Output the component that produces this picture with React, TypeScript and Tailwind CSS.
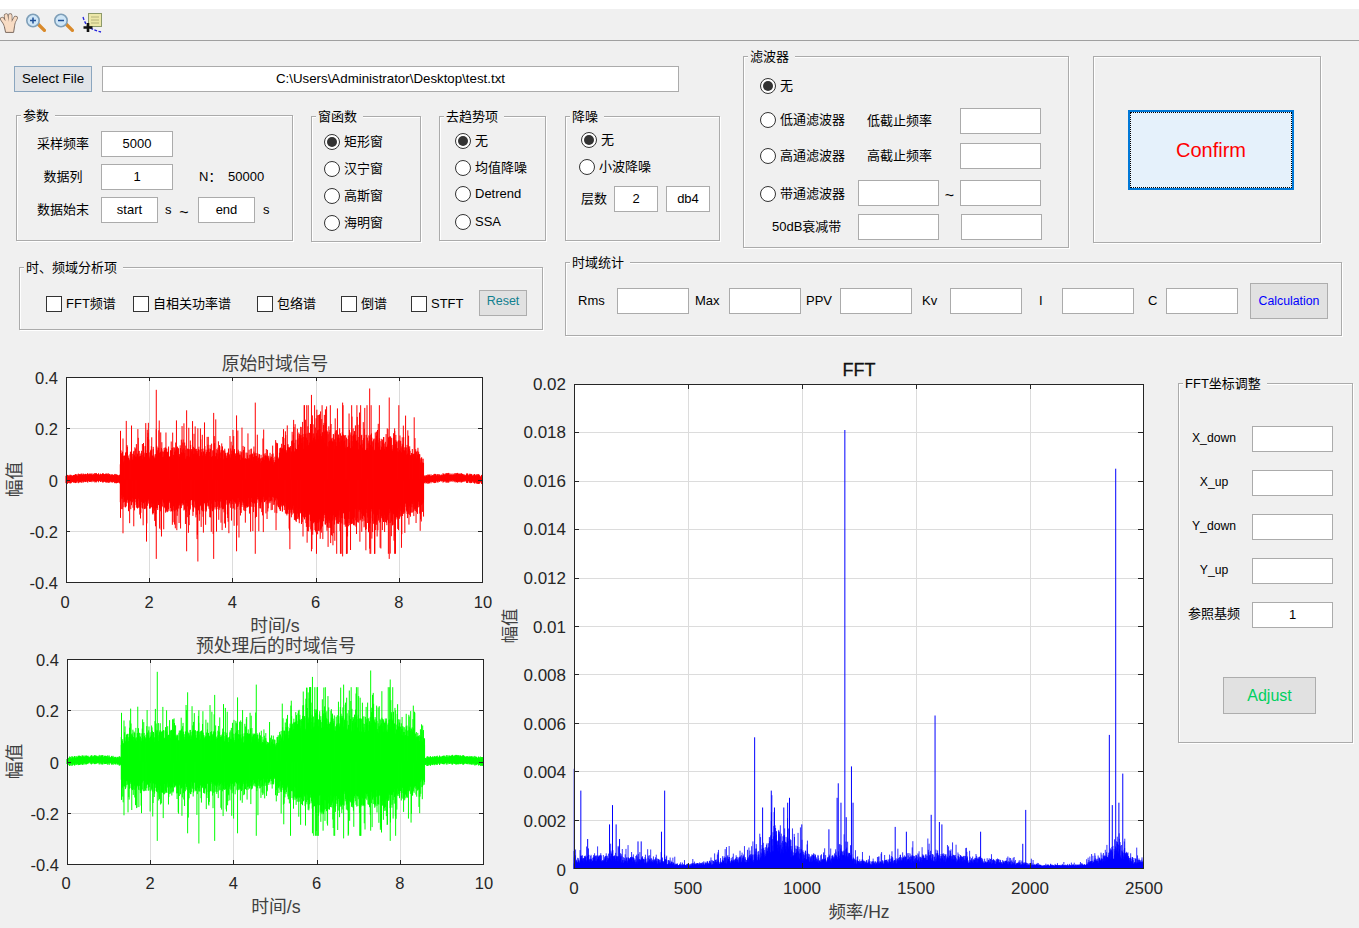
import type { ReactNode } from "react";

// seeded random so the traces stay the same on every render
function makeRandom(seed: number) {
    let a = seed;
    return () => {
        a = (a + 0x6d2b79f5) | 0;
        let t = Math.imul(a ^ (a >>> 15), 1 | a);
        t = (t + Math.imul(t ^ (t >>> 7), 61 | t)) ^ t;
        return ((t ^ (t >>> 14)) >>> 0) / 4294967296;
    };
}

function lerpTable(table: number[][], v: number) {
    for (let i = 1; i < table.length; i++) {
        if (v <= table[i][0]) {
            const [x0, y0] = table[i - 1];
            const [x1, y1] = table[i];
            return y0 + ((y1 - y0) * (v - x0)) / (x1 - x0);
        }
    }
    return table[table.length - 1][1];
}

const TIME_ENV = [
    [1.3, 0.08], [1.45, 0.1], [2.5, 0.115], [3.5, 0.11], [4.5, 0.1], [5, 0.08], [5.15, 0.11],
    [5.6, 0.155], [6, 0.19], [6.5, 0.165], [7.2, 0.16], [7.8, 0.155], [8.3, 0.12], [8.6, 0.085],
];
const TIME_SPIKES = [
    [1.31, 0.19, -0.15], [1.37, 0.16, -0.21], [2.17, 0.35, -0.31], [2.9, 0.27, -0.28], [3.17, 0.2, -0.32],
    [3.55, 0.26, -0.31], [4.1, 0.25, -0.28], [4.55, 0.3, -0.29], [5.9, 0.33, -0.28], [6.65, 0.3, -0.3],
    [7.3, 0.355, -0.27], [7.77, 0.32, -0.31], [7.9, 0.2, -0.29],
];

function timePath(seed: number, left: number, right: number, mid: number, perUnit: number) {
    const rnd = makeRandom(seed);
    const toX = (t: number) => left + (t / 10) * (right - left);
    let d = "";
    const line = (t: number, hi: number, lo: number) => {
        d += `M${toX(t).toFixed(2)} ${(mid - hi * perUnit).toFixed(1)}V${(mid - lo * perUnit).toFixed(1)}`;
    };
    for (let t = 0; t <= 10; t += 0.009) {
        const quiet = t < 1.3 || t > 8.6;
        if (quiet) {
            const hump = 0.007 * Math.sin((Math.PI * (t < 1.3 ? t : t - 8.6)) / 1.4);
            const a = 0.009 + rnd() * 0.01;
            line(t, hump + a, hump - a);
            continue;
        }
        const env = lerpTable(TIME_ENV, t);
        line(t, env * (0.7 + rnd() * 0.4), -env * (0.7 + rnd() * 0.4));
        if (rnd() < 0.6) {
            const reach = Math.min(env * (1.05 + rnd() * rnd() * 1.35), 0.29);
            if (rnd() < 0.5) line(t, reach, 0);
            else line(t, 0, -reach);
        }
    }
    TIME_SPIKES.forEach(([t, hi, lo]) => line(t, hi, lo));
    return d;
}

const FFT_ENV = [
    [0, 0.0006], [100, 0.00065], [250, 0.00055], [400, 0.00045], [470, 0.00018], [560, 0.00026], [640, 0.0005],
    [780, 0.00065], [830, 0.001], [880, 0.002], [950, 0.0014], [1020, 0.00075], [1120, 0.00055], [1190, 0.00095],
    [1240, 0.0004], [1320, 0.00032], [1450, 0.0006], [1600, 0.00075], [1800, 0.0005], [1950, 0.00032],
    [2060, 0.00014], [2230, 0.00016], [2320, 0.0006], [2390, 0.0014], [2440, 0.00055], [2500, 0.0004],
];
const FFT_SPIKES = [
    [1, 0.0041], [30, 0.0032], [60, 0.0012], [156, 0.0018], [169, 0.0026], [185, 0.0018], [200, 0.0012], [281, 0.0011],
    [295, 0.0011], [384, 0.0015], [398, 0.0032], [793, 0.0054], [828, 0.0025], [866, 0.0032], [880, 0.0025],
    [921, 0.0025], [938, 0.0027], [946, 0.0029], [1000, 0.0018], [1119, 0.0016], [1155, 0.0029], [1160, 0.0035],
    [1172, 0.0027], [1189, 0.0181], [1195, 0.0021], [1218, 0.0042], [1225, 0.0027], [1410, 0.0017], [1459, 0.0015],
    [1568, 0.0022], [1585, 0.0063], [1604, 0.0019], [1615, 0.0018], [1785, 0.0015], [1970, 0.001], [1983, 0.0024],
    [2350, 0.0055], [2363, 0.0026], [2378, 0.0165], [2392, 0.0027], [2409, 0.0039],
];

function fftPath() {
    const rnd = makeRandom(77);
    const toX = (f: number) => 574 + (f / 2500) * 569.5;
    const toY = (v: number) => 868 - (v / 0.02) * 484;
    let d = "";
    for (let f = 0; f <= 2500; f += 0.7) {
        const env = lerpTable(FFT_ENV, f);
        const r = rnd();
        let v = env * (0.3 + 0.55 * r * r);
        if (rnd() < 0.1) v = env * (0.8 + rnd() * rnd() * 1.1);
        d += `M${toX(f).toFixed(2)} 869V${toY(v).toFixed(1)}`;
    }
    return d;
}

const spikePath = FFT_SPIKES.map(
    ([f, v]) => `M${(574 + (f / 2500) * 569.5).toFixed(2)} 869V${(868 - (v / 0.02) * 484).toFixed(1)}`
).join("");

const PLOT_TEXT = "#262626";

function TimePlot(props: {
    viewY: number;
    height: number;
    left: number;
    right: number;
    top: number;
    bottom: number;
    tickGap: number;
    title: string;
    titleY: number;
    color: string;
    seed: number;
}) {
    const { viewY, height, left, right, top, bottom, tickGap, title, titleY, color, seed } = props;
    const mid = (top + bottom) / 2;
    const perUnit = (bottom - top) / 0.8;
    const xs = [0, 2, 4, 6, 8, 10];
    const ys = [0.4, 0.2, 0, -0.2, -0.4];
    const center = (left + right) / 2 + 1;
    return (
        <svg width={500} height={height} viewBox={`0 ${viewY} 500 ${height}`} className="block">
            <rect x={left} y={top} width={right - left} height={bottom - top} fill="#fff" />
            {xs.slice(1, -1).map((v) => {
                const x = Math.round(left + (v / 10) * (right - left)) + 0.5;
                return <path key={v} d={`M${x} ${top}V${bottom}`} stroke="#dcdcdc" />;
            })}
            {ys.slice(1, -1).map((v) => {
                const y = Math.round(mid - v * perUnit) + 0.5;
                return <path key={v} d={`M${left} ${y}H${right}`} stroke="#dcdcdc" />;
            })}
            <path d={timePath(seed, left, right, mid, perUnit)} stroke={color} strokeWidth={1} fill="none" />
            <rect x={left + 0.5} y={top + 0.5} width={right - left} height={bottom - top} fill="none" stroke={PLOT_TEXT} />
            {xs.slice(1, -1).map((v) => {
                const x = Math.round(left + (v / 10) * (right - left)) + 0.5;
                return <path key={v} d={`M${x} ${top}v4M${x} ${bottom}v-4`} stroke={PLOT_TEXT} />;
            })}
            {ys.slice(1, -1).map((v) => {
                const y = Math.round(mid - v * perUnit) + 0.5;
                return <path key={v} d={`M${left} ${y}h4M${right} ${y}h-4`} stroke={PLOT_TEXT} />;
            })}
            <g fill={PLOT_TEXT} className="text-[16.5px]">
                {ys.map((v) => (
                    <text key={v} x={left - 8} y={mid - v * perUnit + 7} textAnchor="end">
                        {v}
                    </text>
                ))}
                {xs.map((v) => (
                    <text
                        key={v}
                        x={left + (v / 10) * (right - left) + (v === 10 ? 1 : v === 0 ? -1 : 0)}
                        y={bottom + tickGap}
                        textAnchor="middle"
                    >
                        {v}
                    </text>
                ))}
            </g>
            <g fill="#404040" className="text-[17.8px]">
                <text x={center} y={titleY} textAnchor="middle">
                    {title}
                </text>
                <text x={center} y={bottom + tickGap + 24} textAnchor="middle">
                    时间/s
                </text>
                <text transform={`translate(21 ${mid}) rotate(-90)`} textAnchor="middle">
                    幅值
                </text>
            </g>
        </svg>
    );
}

function FftPlot() {
    const xs = [0, 500, 1000, 1500, 2000, 2500];
    const ys = ["0", "0.002", "0.004", "0.006", "0.008", "0.01", "0.012", "0.014", "0.016", "0.018", "0.02"];
    const xAt = (v: number) => Math.round(574 + (v / 2500) * 569.5) + 0.5;
    const yAt = (i: number) => Math.round(868 - i * 48.4) + 0.5;
    return (
        <svg width={670} height={578} viewBox="500 350 670 578" className="block">
            <rect x={574} y={384} width={569.5} height={484} fill="#fff" />
            {xs.slice(1, -1).map((v) => (
                <path key={v} d={`M${xAt(v)} 384V868`} stroke="#dcdcdc" />
            ))}
            {ys.slice(1, -1).map((v, i) => (
                <path key={v} d={`M574 ${yAt(i + 1)}H1143`} stroke="#dcdcdc" />
            ))}
            <path d={fftPath()} stroke="#0000ff" strokeWidth={0.8} fill="none" />
            <path d={spikePath} stroke="#0000ff" strokeWidth={1} fill="none" />
            <path d="M574 867H1143" stroke="#0000ff" strokeWidth={3} />
            <rect x={574.5} y={384.5} width={569} height={484} fill="none" stroke={PLOT_TEXT} />
            {xs.slice(1, -1).map((v) => (
                <path key={v} d={`M${xAt(v)} 384v5M${xAt(v)} 868v-5`} stroke={PLOT_TEXT} />
            ))}
            {ys.slice(1, -1).map((v, i) => (
                <path key={v} d={`M574 ${yAt(i + 1)}h5M1143 ${yAt(i + 1)}h-5`} stroke={PLOT_TEXT} />
            ))}
            <g fill={PLOT_TEXT} className="text-[17px]">
                {ys.map((v, i) => (
                    <text key={v} x={566} y={875.5 - i * 48.6} textAnchor="end">
                        {v}
                    </text>
                ))}
                {xs.map((v) => (
                    <text key={v} x={xAt(v) - 0.5} y={894} textAnchor="middle">
                        {v}
                    </text>
                ))}
                <text x={859} y={376} textAnchor="middle" fill="#111" className="text-[18px]" stroke="#111" strokeWidth={0.3}>
                    FFT
                </text>
            </g>
            <g fill="#404040" className="text-[17.5px]">
                <text x={859} y={918} textAnchor="middle">
                    频率/Hz
                </text>
                <text transform="translate(516 626) rotate(-90)" textAnchor="middle">
                    幅值
                </text>
            </g>
        </svg>
    );
}

function HandIcon() {
    const fingers = "M5.6 11 L2.2 6 M7.4 10 L6 2.6 M10.2 10 L10.2 2.4 M12.4 11 L15.6 5";
    const palm = "M3.6 10 H15 L13.6 19.4 H5.6 Z";
    return (
        <svg width={18} height={20} viewBox="0 0 18 20">
            <path d={fingers} stroke="#7a6a60" strokeWidth={4.4} strokeLinecap="round" fill="none" />
            <path d={palm} fill="#f8dcc4" stroke="#7a6a60" strokeWidth={1} strokeLinejoin="round" />
            <path d={fingers} stroke="#f8dcc4" strokeWidth={3} strokeLinecap="round" fill="none" />
            <path d="M4.6 9.6h9.6v4H4.6z" fill="#f8dcc4" />
        </svg>
    );
}

function ZoomIcon({ minus }: { minus?: boolean }) {
    return (
        <svg width={20} height={19} viewBox="0 0 20 19">
            <path d="M12 11 L18.4 17.4" stroke="#d98a2b" strokeWidth={3.4} strokeLinecap="round" />
            <circle cx={7} cy={7.5} r={6.2} fill="#cfe6f7" stroke="#7f9fb8" strokeWidth={1.6} />
            <path d={minus ? "M4 7.5h6" : "M4 7.5h6M7 4.5v6"} stroke="#1f4f96" strokeWidth={1.5} />
        </svg>
    );
}

function CursorIcon() {
    return (
        <svg width={20} height={20} viewBox="0 0 20 20">
            <rect x={6.5} y={0.5} width={13} height={13} fill="#ece7a8" stroke="#8d9a6a" />
            <path d="M9 4h8M9 7h8M9 10h8" stroke="#b5b27a" />
            <path d="M1 4 Q3 11 7 14 T19 19" fill="none" stroke="#2222dd" strokeWidth={1.3} strokeDasharray="3 1.5" />
            <path d="M6 10v9M1.5 14.5h9" stroke="#111" strokeWidth={2.6} />
        </svg>
    );
}

function Panel({ title, className, children }: { title?: string; className: string; children?: ReactNode }) {
    return (
        <div className={`relative shrink-0 border border-[#ababab] shadow-[1px_1px_0_#fff,inset_1px_1px_0_#fff] ${className}`}>
            {title && (
                <span className="absolute -top-[8px] left-[4px] bg-[#f0f0f0] pl-[2px] pr-[6px] leading-[15px] whitespace-nowrap">
                    {title}
                </span>
            )}
            {children}
        </div>
    );
}

function Radio({ label, on, className }: { label: string; on?: boolean; className?: string }) {
    return (
        <label className={`flex items-center gap-[4px] h-4 whitespace-nowrap ${className ?? ""}`}>
            <span className="flex items-center justify-center w-4 h-4 rounded-full border border-[#333] bg-white shrink-0">
                {on && <span className="w-[10px] h-[10px] rounded-full bg-[#333]" />}
            </span>
            {label}
        </label>
    );
}

function Check({ label, className }: { label: string; className: string }) {
    return (
        <label className={`flex items-center gap-[4px] whitespace-nowrap ${className}`}>
            <span className="w-4 h-4 border border-[#333] bg-white shrink-0" />
            {label}
        </label>
    );
}

function Field({ value, className }: { value?: string; className: string }) {
    return (
        <input
            readOnly
            defaultValue={value}
            className={`h-[26px] shrink-0 border border-[#ababab] bg-white text-center pb-[2px] outline-none ${className}`}
        />
    );
}

function ParamsPanel() {
    return (
        <Panel title="参数" className="w-[277px] h-[126px] pt-[15px] pl-[20px] flex flex-col gap-[7px]">
            <div className="flex items-center">
                <span className="w-[64px] pr-3 text-center">采样频率</span>
                <Field value="5000" className="w-[72px]" />
            </div>
            <div className="flex items-center">
                <span className="w-[64px] pr-3 text-center">数据列</span>
                <Field value="1" className="w-[72px]" />
                <span className="ml-[26px] w-[29px]">N：</span>
                <span>50000</span>
            </div>
            <div className="flex items-center">
                <span className="w-[64px] pr-3 text-center">数据始末</span>
                <Field value="start" className="w-[57px]" />
                <span className="w-[16px] pl-[7px]">s</span>
                <span className="w-[24px] pr-[4px] text-center text-[16px] leading-none pt-[5px]">~</span>
                <Field value="end" className="w-[57px]" />
                <span className="ml-[8px]">s</span>
            </div>
        </Panel>
    );
}

function FilterPanel() {
    return (
        <Panel title="滤波器" className="w-[326px] h-[192px] ml-[23px] mt-[15px] pl-[16px]">
            <Radio label="无" on className="mt-[21px]" />
            <div className="flex items-center mt-[14px]">
                <Radio label="低通滤波器" className="w-[107px] -mt-[2px]" />
                <span className="w-[93px]">低截止频率</span>
                <Field className="w-[81px]" />
            </div>
            <div className="flex items-center mt-[9px]">
                <Radio label="高通滤波器" className="w-[107px]" />
                <span className="w-[93px]">高截止频率</span>
                <Field className="w-[81px]" />
            </div>
            <div className="flex items-center mt-[11px]">
                <Radio label="带通滤波器" className="w-[98px] mt-[2px]" />
                <Field className="w-[81px]" />
                <span className="w-[21px] text-center text-[16px] leading-none pt-[5px]">~</span>
                <Field className="w-[81px]" />
            </div>
            <div className="flex items-center mt-[8px]">
                <span className="w-[98px] pl-[12px] whitespace-nowrap">50dB衰减带</span>
                <Field className="w-[81px]" />
                <span className="w-[22px]" />
                <Field className="w-[81px]" />
            </div>
        </Panel>
    );
}

function AnalysisRow() {
    return (
        <div className="flex h-[74px]">
            <Panel title="时、频域分析项" className="w-[524px] h-[63px] ml-[19px] mt-[5px] flex items-center pl-[26px] pt-[10px]">
                <Check label="FFT频谱" className="w-[87px]" />
                <Check label="自相关功率谱" className="w-[124px]" />
                <Check label="包络谱" className="w-[84px]" />
                <Check label="倒谱" className="w-[70px]" />
                <Check label="STFT" className="w-[68px]" />
                <button className="w-[48px] h-[26px] border border-[#adadad] bg-[#e1e1e1] text-[#11808f] text-[12.5px] -mt-[2px] pb-[2px]">
                    Reset
                </button>
            </Panel>
            <Panel title="时域统计" className="w-[777px] h-[74px] ml-[22px] flex items-center pl-[12px] pt-[4px]">
                <span className="w-[39px]">Rms</span>
                <Field className="w-[72px]" />
                <span className="w-[40px] pl-[6px]">Max</span>
                <Field className="w-[72px]" />
                <span className="w-[39px] pl-[5px]">PPV</span>
                <Field className="w-[72px]" />
                <span className="w-[38px] pl-[10px]">Kv</span>
                <Field className="w-[72px]" />
                <span className="w-[40px] pl-[17px]">I</span>
                <Field className="w-[72px]" />
                <span className="w-[32px] pl-[14px]">C</span>
                <Field className="w-[72px]" />
                <button className="w-[78px] h-[36px] ml-[12px] border border-[#adadad] bg-[#e1e1e1] text-[#0000ff] text-[12.3px]">
                    Calculation
                </button>
            </Panel>
        </div>
    );
}

function AxisPanel() {
    const rows = [
        ["X_down", "", "text-[12.2px]"],
        ["X_up", "", "text-[12.2px]"],
        ["Y_down", "", "text-[12.2px]"],
        ["Y_up", "", "text-[12.2px]"],
        ["参照基频", "1", "text-[13px]"],
    ];
    return (
        <Panel title="FFT坐标调整" className="w-[175px] h-[360px] ml-[8px] mt-[33px] flex flex-col pl-[9px]">
            <div className="flex flex-col gap-[18px] mt-[42px]">
                {rows.map(([label, value, size]) => (
                    <div key={label} className="flex items-center">
                        <span className={`w-[64px] pr-[12px] text-center whitespace-nowrap -mt-[2px] ${size}`}>{label}</span>
                        <Field value={value} className="w-[81px]" />
                    </div>
                ))}
            </div>
            <button className="w-[93px] h-[37px] ml-[35px] mt-[49px] border border-[#adadad] bg-[#e1e1e1] text-[#00d060] text-[16px]">
                Adjust
            </button>
        </Panel>
    );
}

export default function App() {
    return (
        <div className="w-[1359px] h-[928px] overflow-hidden bg-[#f0f0f0] text-[13px] text-black font-['Liberation_Sans','Noto_Sans_CJK_SC',sans-serif]">
            <div className="h-[9px] bg-white" />
            {/* toolbar */}
            <div className="flex gap-[8px] h-[32px] pt-[4px] border-b border-[#a0a0a0]">
                <HandIcon />
                <ZoomIcon />
                <ZoomIcon minus />
                <CursorIcon />
            </div>

            {/* file picker, settings panels, filter and confirm */}
            <div className="flex h-[221px]">
                <div className="w-[706px] ml-[14px] shrink-0">
                    <div className="flex mt-[25px]">
                        <button className="w-[78px] h-[26px] border border-[#8ba6bf] bg-[#e1e4e8] text-[13.3px]">Select File</button>
                        <Field value="C:\Users\Administrator\Desktop\test.txt" className="w-[577px] ml-[10px] text-[13.3px]" />
                    </div>
                    <div className="flex mt-[23px] pl-[2px]">
                        <ParamsPanel />
                        <Panel title="窗函数" className="w-[110px] h-[126px] ml-[18px] mt-[1px] pl-[12px] pt-[17px] flex flex-col gap-[11px]">
                            <Radio label="矩形窗" on />
                            <Radio label="汉宁窗" />
                            <Radio label="高斯窗" />
                            <Radio label="海明窗" />
                        </Panel>
                        <Panel title="去趋势项" className="w-[107px] h-[125px] ml-[18px] mt-[1px] pl-[15px] pt-[16px] flex flex-col gap-[11px]">
                            <Radio label="无" on />
                            <Radio label="均值降噪" />
                            <Radio label="Detrend" className="-mt-[1px]" />
                            <Radio label="SSA" className="mt-[1px]" />
                        </Panel>
                        <Panel title="降噪" className="w-[155px] h-[125px] ml-[19px] mt-[1px] pl-[14px] pt-[15px]">
                            <Radio label="无" on className="ml-[1px]" />
                            <Radio label="小波降噪" className="mt-[11px] -ml-[1px]" />
                            <div className="flex items-center mt-[11px]">
                                <span className="w-[34px] pl-[1px]">层数</span>
                                <Field value="2" className="w-[44px]" />
                                <Field value="db4" className="w-[44px] ml-[8px]" />
                            </div>
                        </Panel>
                    </div>
                </div>
                <FilterPanel />
                <Panel className="w-[228px] h-[187px] ml-[24px] mt-[15px] pl-[34px] pt-[53px]">
                    <button className="w-[166px] h-[80px] border-2 border-[#0078d7] bg-[#e5f1fb] text-[#ff0000] text-[20px] outline-1 outline-dotted outline-black -outline-offset-[3px]">
                        Confirm
                    </button>
                </Panel>
            </div>

            <AnalysisRow />

            {/* plots */}
            <div className="flex mt-[14px]">
                <div className="w-[500px] shrink-0">
                    <TimePlot viewY={350} height={286} left={66} right={482} top={377} bottom={582} tickGap={26} title="原始时域信号" titleY={370} color="#ff0000" seed={11} />
                    <TimePlot viewY={636} height={292} left={67} right={483} top={659} bottom={864} tickGap={25} title="预处理后的时域信号" titleY={652} color="#00ff00" seed={23} />
                </div>
                <FftPlot />
                <AxisPanel />
            </div>
        </div>
    );
}
